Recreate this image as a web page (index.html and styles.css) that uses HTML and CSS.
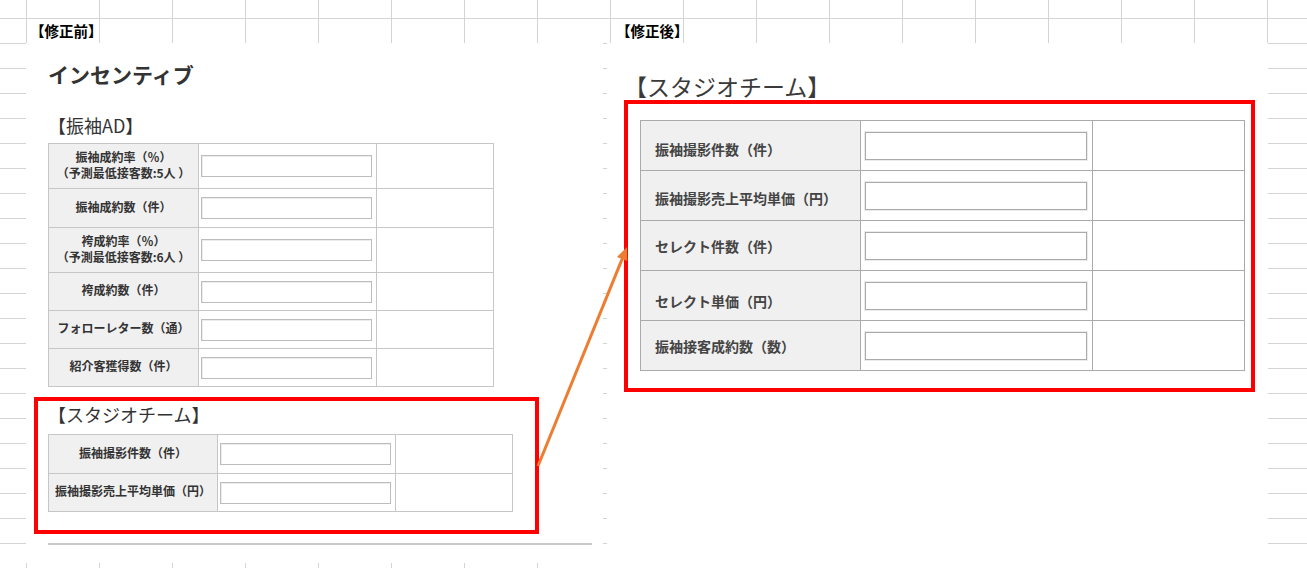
FILE: index.html
```html
<!DOCTYPE html>
<html lang="ja">
<head>
<meta charset="utf-8">
<title>修正前・修正後</title>
<link rel="stylesheet" href="styles.css">
</head>
<body>
<div class="sheet">
  <div class="cell-label label-before">【修正前】</div>
  <div class="cell-label label-after">【修正後】</div>

  <section class="shot shot-before">
    <h1 class="page-title">インセンティブ</h1>
    <h2 class="sec-title sec-ad">【振袖AD】</h2>
    <table class="form form-ad">
      <colgroup><col class="ad-c1"><col class="ad-c2"><col class="ad-c3"></colgroup>
      <tr class="h45"><th>振袖成約率（％）<br>（予測最低接客数:5人 ）</th><td><input class="inp" type="text"></td><td></td></tr>
      <tr class="h39"><th>振袖成約数（件）</th><td><input class="inp" type="text"></td><td></td></tr>
      <tr class="h45"><th>袴成約率（％）<br>（予測最低接客数:6人 ）</th><td><input class="inp" type="text"></td><td></td></tr>
      <tr class="h38"><th>袴成約数（件）</th><td><input class="inp" type="text"></td><td></td></tr>
      <tr class="h38"><th>フォローレター数（通）</th><td><input class="inp" type="text"></td><td></td></tr>
      <tr class="h38"><th>紹介客獲得数（件）</th><td><input class="inp" type="text"></td><td></td></tr>
    </table>
    <h2 class="sec-title sec-studio">【スタジオチーム】</h2>
    <table class="form form-studio">
      <colgroup><col class="st-c1"><col class="st-c2"><col class="st-c3"></colgroup>
      <tr class="h39"><th>振袖撮影件数（件）</th><td><input class="inp" type="text"></td><td></td></tr>
      <tr class="h38"><th>振袖撮影売上平均単価（円）</th><td><input class="inp" type="text"></td><td></td></tr>
    </table>
    <hr class="rule">
  </section>

  <section class="shot shot-after">
    <h2 class="big-title">【スタジオチーム】</h2>
    <table class="form-big">
      <colgroup><col class="bg-c1"><col class="bg-c2"><col class="bg-c3"></colgroup>
      <tr><th class="lo">振袖撮影件数（件）</th><td><input class="inp-big" type="text"></td><td></td></tr>
      <tr><th>振袖撮影売上平均単価（円）</th><td><input class="inp-big" type="text"></td><td></td></tr>
      <tr><th class="mid">セレクト件数（件）</th><td><input class="inp-big" type="text"></td><td></td></tr>
      <tr><th class="low">セレクト単価（円）</th><td><input class="inp-big" type="text"></td><td></td></tr>
      <tr><th class="mid">振袖接客成約数（数）</th><td><input class="inp-big" type="text"></td><td></td></tr>
    </table>
  </section>

  <div class="mark mark-before"></div>
  <div class="mark mark-after"></div>
  <svg class="arrow" width="1307" height="568" viewBox="0 0 1307 568">
    <line x1="538" y1="466" x2="622.4" y2="258.4" stroke="#ed7d31" stroke-width="3"/>
    <polygon points="627,247 627.2,261.1 617,256.9" fill="#ed7d31"/>
  </svg>
</div>
</body>
</html>
```

FILE: styles.css
```css
* { box-sizing: border-box; }

html, body {
  margin: 0;
  padding: 0;
  background: #fff;
}

body {
  font-family: "Noto Sans CJK JP", "Noto Sans", sans-serif;
  color: #333;
}

.sheet {
  position: relative;
  width: 1307px;
  height: 568px;
  overflow: hidden;
  background-color: #fff;
  background-image:
    linear-gradient(to right, #d4d4d4 1px, transparent 1px),
    linear-gradient(to bottom, #d4d4d4 1px, transparent 1px);
  background-size: 73px 100%, 100% 25px;
  background-position: 26px 0, 0 18px;
}

.cell-label {
  position: absolute;
  top: 18px;
  height: 25px;
  line-height: 25px;
  font-size: 14.5px;
  font-weight: 700;
  color: #000;
  white-space: nowrap;
}
.label-before { left: 30px; }
.label-after { left: 616px; }

.shot {
  position: absolute;
  top: 43px;
  background: #fff;
}

.shot-before {
  left: 26px;
  width: 577px;
  height: 520px;
  padding: 16px 0 0 22px;
}

.shot-after {
  left: 607px;
  width: 661px;
  height: 530px;
  padding: 27px 0 0 17px;
}

.page-title {
  margin: 0;
  font-size: 21px;
  line-height: 30px;
  font-weight: 700;
  color: #333;
}

.sec-title {
  margin: 0;
  font-size: 18px;
  line-height: 24px;
  font-weight: 400;
  color: #333;
  white-space: nowrap;
}
.sec-ad { margin-top: 24px; }
.sec-studio { margin-top: 15px; }

.form {
  border-collapse: collapse;
  table-layout: fixed;
}
.form th,
.form td {
  border: 1px solid #c6c6c6;
  padding: 0;
}
.form th {
  background: #f0f0f0;
  font-size: 12px;
  line-height: 16px;
  font-weight: 700;
  color: #333;
  text-align: center;
  vertical-align: middle;
  white-space: nowrap;
  padding-bottom: 3px;
}
.form td {
  background: #fff;
  padding-left: 2px;
  vertical-align: middle;
}

.form-ad { margin-top: 6px; width: 445px; }
.ad-c1 { width: 150px; }
.ad-c2 { width: 178px; }
.ad-c3 { width: 117px; }

.form-studio { margin-top: 8px; width: 464px; }
.st-c1 { width: 169px; }
.st-c2 { width: 178px; }
.st-c3 { width: 117px; }

.h45 { height: 45px; }
.h39 { height: 39px; }
.h38 { height: 38px; }

.inp {
  display: block;
  width: 171px;
  height: 22px;
  margin: 0;
  padding: 0;
  border: 1px solid #bdbdbd;
  box-shadow: inset 1px 1px 0 #ececec;
  background: #fff;
}

.rule {
  margin: 31px 0 0 0;
  width: 544px;
  height: 2px;
  border: none;
  background: #c8c8c8;
}

.big-title {
  margin: 0;
  font-size: 23px;
  line-height: 32px;
  font-weight: 400;
  color: #3a3a3a;
  white-space: nowrap;
}

.form-big {
  margin: 18px 0 0 16px;
  width: 604px;
  border-collapse: collapse;
  table-layout: fixed;
}
.bg-c1 { width: 220px; }
.bg-c2 { width: 232px; }
.bg-c3 { width: 152px; }

.form-big tr { height: 50px; }
.form-big th,
.form-big td {
  border: 1px solid #aaa;
  padding: 0;
}
.form-big th {
  background: #f0f0f0;
  font-size: 14px;
  line-height: 20px;
  font-weight: 700;
  color: #444;
  text-align: left;
  vertical-align: middle;
  padding: 5px 0 0 14px;
  white-space: nowrap;
}
.form-big th.lo { padding-top: 7px; }
.form-big th.mid { padding-top: 1px; }
.form-big th.low { padding-top: 11px; }
.form-big td {
  background: #fff;
  padding-left: 4px;
  vertical-align: middle;
}

.inp-big {
  display: block;
  width: 222px;
  height: 28px;
  margin: 0;
  padding: 0;
  border: 1px solid #aaa;
  box-shadow: 0 0 0 1px #ececec;
  background: #fff;
}

.mark {
  position: absolute;
  border: 4px solid #ff0000;
}
.mark-before { left: 34px; top: 397px; width: 505px; height: 137px; }
.mark-after { left: 624px; top: 100px; width: 631px; height: 292px; }

.arrow {
  position: absolute;
  left: 0;
  top: 0;
  pointer-events: none;
}
```
